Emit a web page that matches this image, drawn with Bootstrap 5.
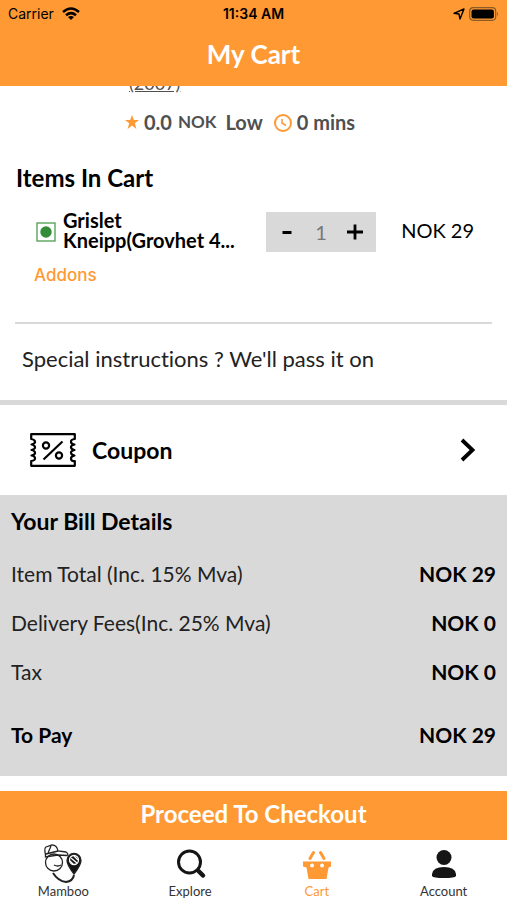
<!DOCTYPE html>
<html lang="en">
<head>
<meta charset="utf-8">
<meta name="viewport" content="width=device-width, initial-scale=1">
<title>My Cart</title>
<link href="https://cdn.jsdelivr.net/npm/bootstrap@5.3.0/dist/css/bootstrap.min.css" rel="stylesheet">
<style>
  :root { --brand: #ff9933; --soft: #d9d9d9; }
  body { font-family: Lato, "Open Sans", sans-serif; font-size: 20px; line-height: 24px; color: #000; background: #fff; font-variant-ligatures: none; }
  svg { display: block; flex-shrink: 0; }
  .brand-bg { background: var(--brand); }
  .brand-text { color: var(--brand); }
  .status-bar { font: 14px/28px Inter, sans-serif; padding: 0 8px; }
  .status-bar > * { flex: 1 1 0; }
  .page-title { font-size: 26px; line-height: 28px; font-weight: 700; padding: 12px 0 18px; }
  .shop-link { font-size: 18px; line-height: 20px; color: #505050; margin: -13px 0 0 129px; }
  .shop-meta { font-size: 20px; font-weight: 700; color: #505050; padding: 17px 0 16px 124px; }
  .shop-meta .currency { font-size: 17px; margin: 0 9px 0 6px; }
  .section-title { font-size: 24px; line-height: 28px; font-weight: 700; padding: 14px 16px 0; }
  .cart-row { padding: 18px 33px 0 36px; }
  .item-name { font-size: 20px; line-height: 20px; font-weight: 700; width: 184px; margin: 0 19px 0 7px; padding-bottom: 4px; }
  .stepper { background: var(--soft); width: 110px; height: 40px; }
  .stepper button { width: 42px; height: 40px; }
  .stepper output { color: #777; }
  .price { padding-bottom: 4px; }
  .addons { font: 500 17px/24px Inter, sans-serif; margin: 9px 34px 0; }
  .note-box { border-top: 2px solid var(--soft); margin: 35px 15px 0; }
  .note-box input { height: 76px; padding: 0 7px 8px; font-size: 22px; color: #222; font-variant-ligatures: none; }
  .note-box input::placeholder { color: #222; opacity: 1; }
  .coupon { border-top: 5px solid var(--soft) !important; height: 95px; padding: 0 30px; font-size: 23px; font-weight: 700; }
  .bill { background: var(--soft); padding: 12px 11px 3px; }
  .bill h2 { font-size: 23px; line-height: 28px; font-weight: 700; margin-bottom: 14px; }
  .bill th, .bill td { height: 49px; padding: 0; vertical-align: middle; }
  .bill th { font-weight: 400; color: #222; font-size: 21px; }
  .bill td { font-weight: 700; text-align: right; font-size: 21px; }
  .bill tfoot th, .bill tfoot td { height: 77px; font-weight: 700; color: #000; }
  .checkout { height: 49px; margin-top: 15px; font-size: 24px; font-weight: 700; padding-bottom: 4px; }
  .tabs a { height: 60px; padding-top: 4px; font-size: 13px; line-height: 16px; color: #333; }
  .tabs a.active { color: var(--brand); }
</style>
</head>
<body>
<div class="min-vh-100 d-flex flex-column">
  <header class="brand-bg">
    <div class="status-bar d-flex align-items-center">
      <div class="d-flex align-items-center gap-2"><span>Carrier</span>
        <svg width="18" height="14" viewBox="0 0 18 14" fill="none" stroke="#000" stroke-width="2.500"><path d="M1 5Q9-2 17 5M4 8.200Q9 4 14 8.200"/><path d="M6 10Q9 8 12 10L9 13Z" fill="#000" stroke="none"/></svg>
      </div>
      <div class="text-center fw-semibold">11:34 AM</div>
      <div class="d-flex justify-content-end align-items-center gap-1">
        <svg width="12" height="12" viewBox="0 0 12 12" fill="none" stroke="#000" stroke-width="1.400" stroke-linejoin="round"><path d="M1 5.300L11 1 7 11 6 6Z"/></svg>
        <svg width="30" height="14" viewBox="0 0 30 14"><rect x=".7" y=".7" width="26" height="12.600" rx="3.500" fill="none" stroke="#8c5a28" stroke-width="1.200"/><rect x="2.500" y="2.500" width="22.400" height="9" rx="2" fill="#000"/><path d="M28 5q2 2 0 4z" fill="#8c5a28"/></svg>
      </div>
    </div>
    <h1 class="page-title text-center text-white m-0">My Cart</h1>
  </header>

  <main class="overflow-hidden">
    <a href="#" class="shop-link d-block"><span>(2007)</span></a>
    <div class="shop-meta d-flex align-items-center">
      <svg width="16" height="16" viewBox="0 0 16 16" fill="#ff9933"><path d="M8 1l1.800 5H15l-4.200 3.200L12.400 15 8 11.500 3.600 15l1.600-5.800L1 6h5.200z"/></svg>
      <span class="ms-1">0.0</span><span class="currency">NOK</span><span>Low</span>
      <svg class="ms-2 me-1" width="22" height="20" viewBox="-2 0 22 20" fill="none" stroke="#ff9933" stroke-width="2"><circle cx="10" cy="11" r="8"/><path d="M9 7v4l4 2.500" stroke-width="1.500"/></svg>
      <span>0 mins</span>
    </div>

    <h2 class="section-title m-0">Items In Cart</h2>
    <div class="cart-row d-flex align-items-center">
      <svg width="20" height="20" viewBox="0 0 20 20"><rect x="1" y="1" width="18" height="18" fill="none" stroke="#4c9d50" stroke-width="1.300"/><circle cx="10" cy="10" r="5.700" fill="#338d38"/></svg>
      <div class="item-name">Grislet<br>Kneipp(Grovhet 4...</div>
      <div class="stepper d-flex align-items-center justify-content-between flex-shrink-0">
        <button type="button" class="border-0 bg-transparent p-0" aria-label="Remove one"><svg class="mx-auto" width="16" height="16" viewBox="0 0 16 16"><path d="M3.500 8.500h9" stroke="#000" stroke-width="3"/></svg></button>
        <output>1</output>
        <button type="button" class="border-0 bg-transparent p-0" aria-label="Add one"><svg class="mx-auto" width="16" height="16" viewBox="0 0 16 16"><path d="M0 8h16M8 .5v15" stroke="#000" stroke-width="2.800"/></svg></button>
      </div>
      <span class="price ms-auto text-nowrap">NOK 29</span>
    </div>
    <a href="#" class="addons brand-text d-block text-decoration-none">Addons</a>
    <div class="note-box">
      <input type="text" class="w-100 border-0 bg-transparent d-block" aria-label="Special instructions" placeholder="Special instructions ? We'll pass it on">
    </div>

    <button type="button" class="coupon w-100 border-0 bg-white d-flex align-items-center text-black">
      <svg width="46" height="34" viewBox="0 0 46 34" fill="none" stroke="#000" stroke-width="2.200" stroke-linejoin="round"><path d="M1.200 1.200H44.800V6Q40.500 6.500 41 9t3.500 2.500Q40.500 12.500 41 14.500t3.500 2.500Q40.500 18 41 20t3.500 2.500Q40.500 23.500 41 26t3.800 2v4.800H1.200V28Q5.500 27.500 5 25t-3.500-2.500Q5.500 21.500 5 19.500T1.500 17Q5.500 16 5 14t-3.500-2.500Q5.500 10.500 5 8.500T1.200 6Z"/><path d="M13.500 26.500L32.500 8.500"/><circle cx="16" cy="12.500" r="3.100"/><circle cx="29" cy="22.500" r="3.100"/></svg>
      <span class="ms-3">Coupon</span>
      <svg class="ms-auto" width="20" height="24" viewBox="0 0 20 24" fill="none" stroke="#000" stroke-width="3.800"><path d="M5 2L15.500 12 5 22"/></svg>
    </button>

    <section class="bill">
      <h2>Your Bill Details</h2>
      <table class="w-100">
        <tbody>
          <tr><th scope="row">Item Total (Inc. 15% Mva)</th><td>NOK 29</td></tr>
          <tr><th scope="row">Delivery Fees(Inc. 25% Mva)</th><td>NOK 0</td></tr>
          <tr><th scope="row">Tax</th><td>NOK 0</td></tr>
        </tbody>
        <tfoot><tr><th scope="row">To Pay</th><td>NOK 29</td></tr></tfoot>
      </table>
    </section>
  </main>

  <button type="button" class="checkout brand-bg border-0 text-white w-100 pt-0">Proceed To Checkout</button>
  <nav class="tabs row row-cols-4 g-0 text-center">
    <a href="#" class="col text-decoration-none">
      <svg class="mx-auto" width="40" height="39" viewBox="0 0 40 39" fill="none" stroke="#222" stroke-width="1.300"><circle cx="11" cy="18.500" r="8.500"/><path d="M2.500 11Q1 4 3 3L9 .8Q14 1 15 7L23 8Q26 10 24 11.500L15 11 2.500 13zM3 10l12-3M8 2L5 9M11 21q4 2 7 0"/><path d="M10 29Q15 37 23 38 30 37 31 31" stroke-width="2"/><path d="M31 30Q24 21 24 16.500a7 7 0 0114 0Q38 21 31 30Z" fill="#151515"/><circle cx="31" cy="16" r="4.500" stroke="#fff"/><path d="M28 14l6 5M31 12l4 4M27 17l3 3" stroke="#fff"/></svg>
      <span class="d-block">Mamboo</span></a>
    <a href="#" class="col text-decoration-none">
      <svg class="mx-auto" width="40" height="39" viewBox="0 0 40 39" fill="none" stroke="#151515"><circle cx="19.500" cy="18" r="11" stroke-width="3"/><path d="M27 26l2 2" stroke-width="3"/><path d="M29 27.500l4 4" stroke-width="4.500" stroke-linecap="round"/></svg>
      <span class="d-block">Explore</span></a>
    <a href="#" class="col text-decoration-none active" aria-current="page">
      <svg class="mx-auto" width="40" height="39" viewBox="0 0 40 39" fill="#ff9933"><path d="M6 17.500h28v5l-2.500 1L29.500 35h-18L9.500 23.500 6 22.500z"/><path d="M13 14.500l3.500-6M27 14.500l-3.500-6" stroke="#ff9933" stroke-width="3" stroke-linecap="round"/><circle cx="15" cy="21.500" r="2" fill="#fff"/><circle cx="25" cy="21.500" r="2" fill="#fff"/></svg>
      <span class="d-block">Cart</span></a>
    <a href="#" class="col text-decoration-none">
      <svg class="mx-auto" width="40" height="39" viewBox="0 0 40 39" fill="#151515"><circle cx="20" cy="13.500" r="7.500"/><path d="M8 32v-2Q9 23 20 23t12 7v2Q31 34 20 34T8 32Z"/></svg>
      <span class="d-block">Account</span></a>
  </nav>
</div>
<script src="https://cdn.jsdelivr.net/npm/bootstrap@5.3.0/dist/js/bootstrap.bundle.min.js"></script>
</body>
</html>
